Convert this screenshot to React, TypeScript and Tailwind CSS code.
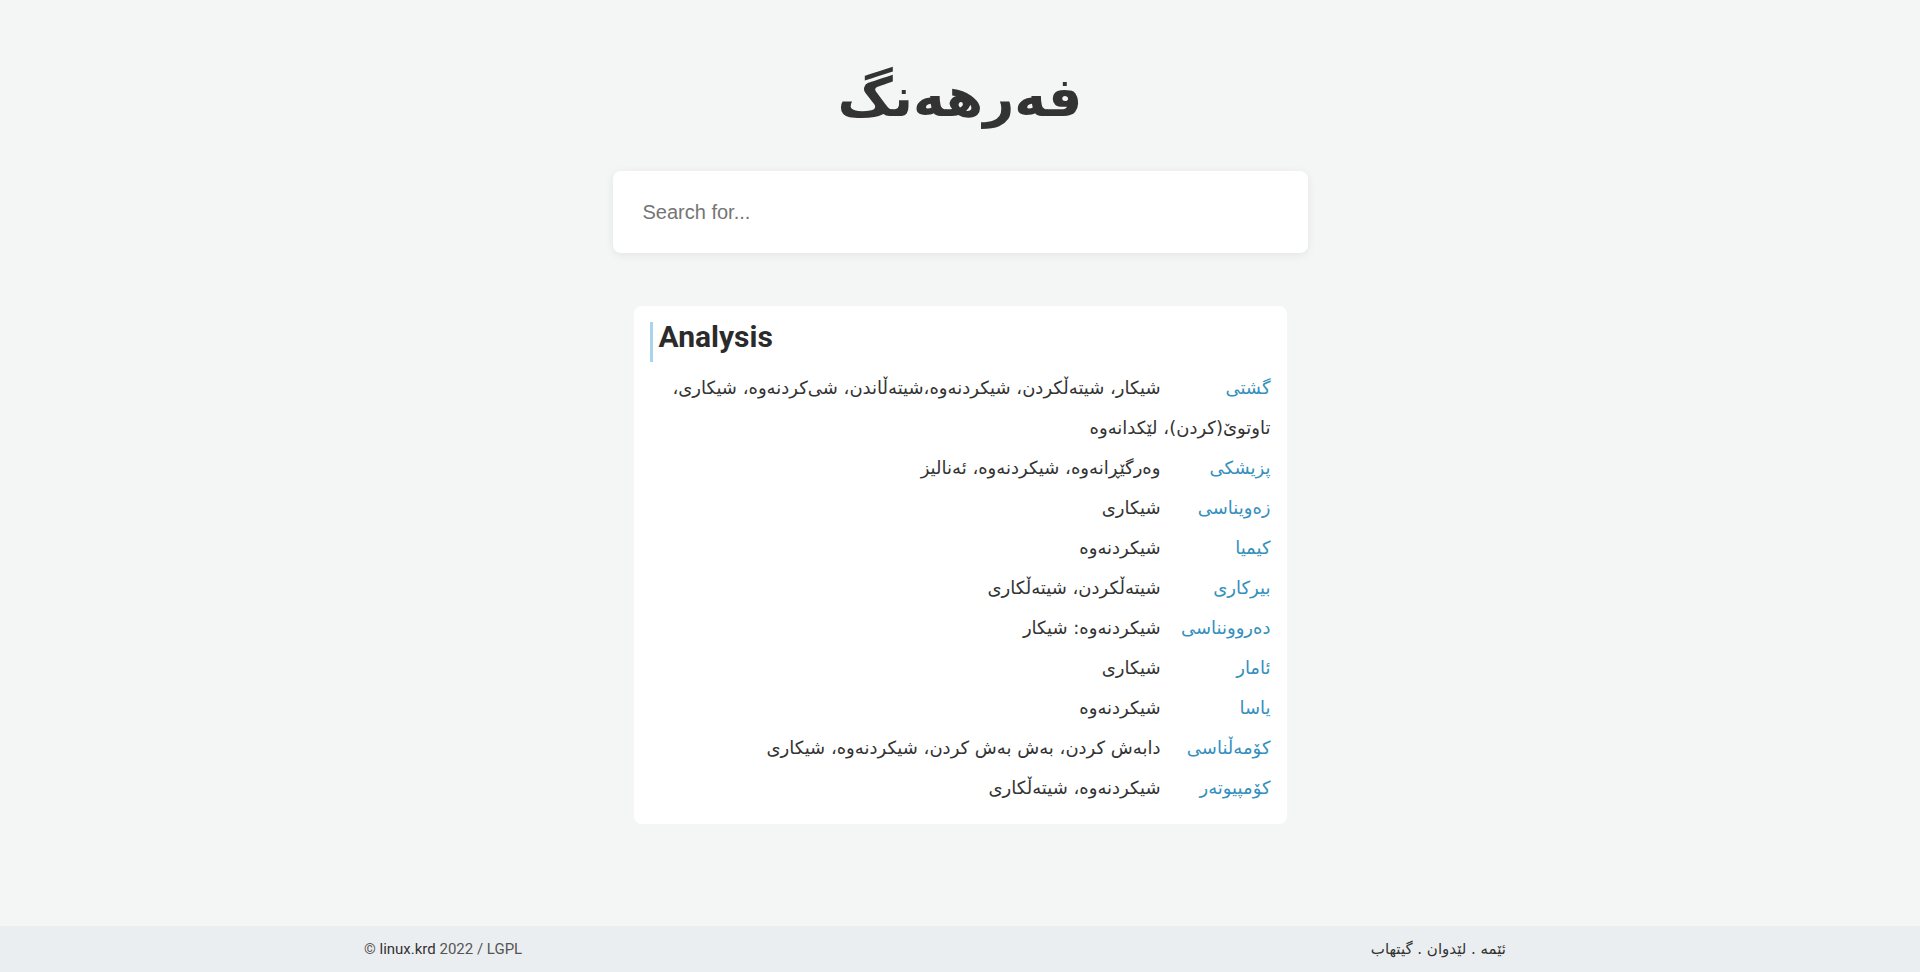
import React from 'react';

interface Entry {
    field: string;
    meaning: string;
}

const ENTRIES: Entry[] = [
    { field: 'گشتی', meaning: 'شیکار، شیتەڵکردن، شیکردنەوە،شیتەڵاندن، شی\u200cکردنەوە، شیکاری، تاوتوێ(کردن)، لێکدانەوە' },
    { field: 'پزیشکی', meaning: 'وەرگێڕانەوە، شیکردنەوە، ئەنالیز' },
    { field: 'زەویناسی', meaning: 'شیکاری' },
    { field: 'کیمیا', meaning: 'شیکردنەوە' },
    { field: 'بیرکاری', meaning: 'شیتەڵکردن، شیتەڵکاری' },
    { field: 'دەروونناسی', meaning: 'شیکردنەوە: شیکار' },
    { field: 'ئامار', meaning: 'شیکاری' },
    { field: 'یاسا', meaning: 'شیکردنەوە' },
    { field: 'کۆمەڵناسی', meaning: 'دابەش کردن، بەش بەش کردن، شیکردنەوە، شیکاری' },
    { field: 'کۆمپیوتەر', meaning: 'شیکردنەوە، شیتەڵکاری' },
];

const App: React.FC = () => {
    return (
        <div className="min-h-screen flex flex-col bg-[#f4f5f5] text-[#333] font-['Roboto','DejaVu_Sans',sans-serif]">
            <main className="flex-1 flex flex-col items-center">
                {/* Title */}
                <h1 dir="rtl" className="mt-[58px] text-[54px] leading-[80px] font-bold text-[#333] font-['DejaVu_Sans',sans-serif]">
                    فەرهەنگ
                </h1>

                {/* Search */}
                <div className="mt-[33px] w-[695px] h-[82px] bg-white rounded-lg shadow-[0_2px_10px_rgba(0,0,0,0.07)] flex items-center px-[30px]">
                    <input
                        type="text"
                        placeholder="Search for..."
                        className="w-full bg-transparent text-[20px] font-['Liberation_Sans',sans-serif] placeholder:text-[#757575] focus:outline-none"
                    />
                </div>

                {/* Result card */}
                <div className="mt-[53px] w-[653px] bg-white rounded-lg p-4">
                    <h2 className="border-l-[3px] border-[#a8d4ec] pl-[6px] pb-[10px] text-[30px] leading-[30px] font-bold text-[#2b2b2b]">
                        Analysis
                    </h2>
                    <div dir="rtl" className="mt-[6px] text-[18px] leading-[40px] font-['DejaVu_Sans',sans-serif]">
                        {ENTRIES.map((e, i) => (
                            <p key={i}>
                                <span className="inline-block min-w-[90px] ml-[20px] text-[#3490bd]">{e.field}</span>
                                {e.meaning}
                            </p>
                        ))}
                    </div>
                </div>
            </main>

            {/* Footer */}
            <footer className="h-[46px] bg-[#ebeef0] flex items-center">
                <div className="ml-[364px] w-[1142px] flex justify-between items-center text-[15px]">
                    <span className="text-[#555]">
                        © <span className="text-[#333]">linux.krd</span> 2022 / LGPL
                    </span>
                    <span dir="rtl" className="text-[#333] font-['DejaVu_Sans',sans-serif]">ئێمە . لێدوان . گیتهاب</span>
                </div>
            </footer>
        </div>
    );
};

export default App;
